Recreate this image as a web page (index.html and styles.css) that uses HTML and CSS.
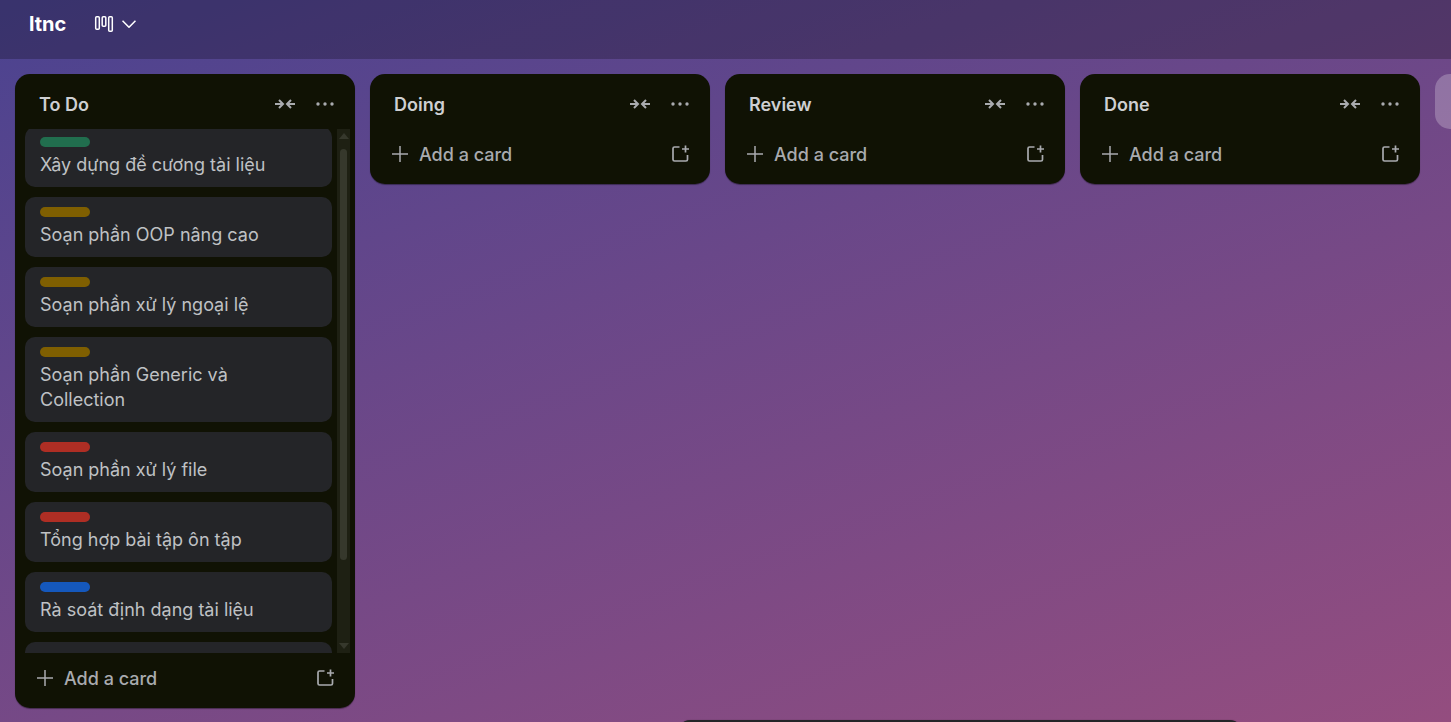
FILE: index.html
```html
<!DOCTYPE html>
<html lang="vi">

<head>
    <meta charset="UTF-8">
    <meta name="viewport" content="width=device-width, initial-scale=1.0">
    <title>ltnc</title>
    <link rel="stylesheet" href="styles.css">
</head>

<body>
    <!-- shared icons -->
    <svg class="sprite" aria-hidden="true">
        <symbol id="collapse" viewBox="0 0 20 12">
            <path d="M0 6h7M4 2l4 4-4 4M20 6h-7M16 2l-4 4 4 4" />
        </symbol>
        <symbol id="more" viewBox="0 0 20 4">
            <circle cx="3" cy="2" r="1.700" />
            <circle cx="10" cy="2" r="1.700" />
            <circle cx="17" cy="2" r="1.700" />
        </symbol>
        <symbol id="plus" viewBox="0 0 16 16">
            <path d="M8 0v16M0 8h16" />
        </symbol>
        <symbol id="template" viewBox="0 0 18 18">
            <path d="M8.500 2H3.500q-1.500 0-1.500 1.500v11q0 1.500 1.500 1.500h11.500q1.500 0 1.500-1.500V10M14.500 .5v7M11 4h7" />
        </symbol>
    </svg>

    <header class="header">
        <h1 class="board-name">ltnc</h1>
        <button class="view-button" aria-label="Board view">
            <svg class="view-icon" viewBox="0 0 20 18">
                <rect x="1.700" y="1.700" width="3.600" height="12.600" rx="1" />
                <rect x="8.200" y="1.700" width="3.600" height="9.600" rx="1" />
                <rect x="14.700" y="1.700" width="3.600" height="14.600" rx="1" />
            </svg>
            <svg class="chevron" viewBox="0 0 14 8">
                <path d="M.5.700L7 7.200 13.500.700" />
            </svg>
        </button>
    </header>

    <main class="board">
        <section class="list">
            <div class="list-header">
                <h2 class="list-title">To Do</h2>
                <button class="icon-button" aria-label="Collapse list"><svg class="collapse"><use href="#collapse" /></svg></button>
                <button class="icon-button" aria-label="List actions"><svg class="more"><use href="#more" /></svg></button>
            </div>
            <div class="list-body">
                <div class="cards" id="todoCards">
                    <article class="card">
                        <div class="label green"></div>
                        <a class="card-title" href="#">Xây dựng đề cương tài liệu</a>
                    </article>
                    <article class="card">
                        <div class="label yellow"></div>
                        <a class="card-title" href="#">Soạn phần OOP nâng cao</a>
                    </article>
                    <article class="card">
                        <div class="label yellow"></div>
                        <a class="card-title" href="#">Soạn phần xử lý ngoại lệ</a>
                    </article>
                    <article class="card">
                        <div class="label yellow"></div>
                        <a class="card-title" href="#">Soạn phần Generic và Collection</a>
                    </article>
                    <article class="card">
                        <div class="label red"></div>
                        <a class="card-title" href="#">Soạn phần xử lý file</a>
                    </article>
                    <article class="card">
                        <div class="label red"></div>
                        <a class="card-title" href="#">Tổng hợp bài tập ôn tập</a>
                    </article>
                    <article class="card">
                        <div class="label blue"></div>
                        <a class="card-title" href="#">Rà soát định dạng tài liệu</a>
                    </article>
                    <article class="card"></article>
                    <article class="card"></article>
                </div>
                <div class="scrollbar">
                    <span class="arrow up"></span>
                    <div class="track">
                        <div class="thumb"></div>
                    </div>
                    <span class="arrow down"></span>
                </div>
            </div>
            <div class="list-footer">
                <button class="add-card"><svg class="plus"><use href="#plus" /></svg>Add a card</button>
                <button class="icon-button" aria-label="Create from template"><svg class="template"><use href="#template" /></svg></button>
            </div>
        </section>

        <section class="list">
            <div class="list-header">
                <h2 class="list-title">Doing</h2>
                <button class="icon-button" aria-label="Collapse list"><svg class="collapse"><use href="#collapse" /></svg></button>
                <button class="icon-button" aria-label="List actions"><svg class="more"><use href="#more" /></svg></button>
            </div>
            <div class="list-footer">
                <button class="add-card"><svg class="plus"><use href="#plus" /></svg>Add a card</button>
                <button class="icon-button" aria-label="Create from template"><svg class="template"><use href="#template" /></svg></button>
            </div>
        </section>

        <section class="list">
            <div class="list-header">
                <h2 class="list-title">Review</h2>
                <button class="icon-button" aria-label="Collapse list"><svg class="collapse"><use href="#collapse" /></svg></button>
                <button class="icon-button" aria-label="List actions"><svg class="more"><use href="#more" /></svg></button>
            </div>
            <div class="list-footer">
                <button class="add-card"><svg class="plus"><use href="#plus" /></svg>Add a card</button>
                <button class="icon-button" aria-label="Create from template"><svg class="template"><use href="#template" /></svg></button>
            </div>
        </section>

        <section class="list">
            <div class="list-header">
                <h2 class="list-title">Done</h2>
                <button class="icon-button" aria-label="Collapse list"><svg class="collapse"><use href="#collapse" /></svg></button>
                <button class="icon-button" aria-label="List actions"><svg class="more"><use href="#more" /></svg></button>
            </div>
            <div class="list-footer">
                <button class="add-card"><svg class="plus"><use href="#plus" /></svg>Add a card</button>
                <button class="icon-button" aria-label="Create from template"><svg class="template"><use href="#template" /></svg></button>
            </div>
        </section>

        <button class="add-list" aria-label="Add another list"></button>
    </main>

    <nav class="dock"></nav>

    <script>
        // Cards start slightly scrolled
        document.getElementById("todoCards").scrollTop = 2;
    </script>
</body>

</html>
```

FILE: styles.css
```css
* {
    box-sizing: border-box;
}

body {
    margin: 0;
    height: 100vh;
    display: flex;
    flex-direction: column;
    overflow: hidden;
    font-family: Inter, "Noto Sans", sans-serif;
    font-size: 18px;
    line-height: 25px;
    color: #bfc1c4;
    background: linear-gradient(160deg, #4b4390, #944d7f);
}

h1,
h2 {
    margin: 0;
}

button {
    border: none;
    padding: 0;
    background: none;
    font: inherit;
    color: inherit;
    cursor: pointer;
}

svg {
    display: block;
    fill: none;
    stroke: currentColor;
}

.sprite {
    display: none;
}

.header {
    flex: none;
    display: flex;
    align-items: center;
    gap: 28px;
    height: 59px;
    padding: 0 29px 11px;
    color: #fff;
    background: rgba(0, 0, 0, 0.24);
}

.board-name {
    font-size: 20px;
    font-weight: 700;
}

.view-button {
    display: flex;
    align-items: center;
    gap: 8px;
}

.view-icon {
    width: 20px;
    height: 18px;
    stroke-width: 1.5;
}

.chevron {
    width: 14px;
    height: 8px;
    stroke-width: 1.6;
}

.board {
    flex: 1;
    min-height: 0;
    display: flex;
    align-items: flex-start;
    gap: 15px;
    padding: 15px 15px 14px;
    overflow: hidden;
}

.list {
    flex: none;
    display: flex;
    flex-direction: column;
    width: 340px;
    max-height: 100%;
    border-radius: 15px;
    background: #101204;
    box-shadow: 0 1px 1px rgba(0, 0, 0, 0.4);
}

.list-header {
    flex: none;
    display: flex;
    align-items: center;
    height: 55px;
    padding: 5px 10px 0 24px;
}

.list-title {
    flex: 1;
    font-size: 18px;
    font-weight: 600;
    color: #cecfd2;
}

.icon-button {
    display: flex;
    justify-content: center;
    align-items: center;
    width: 40px;
    height: 40px;
    color: #a9abaf;
}

.collapse {
    width: 20px;
    height: 12px;
    stroke-width: 2;
}

.more {
    width: 20px;
    height: 4px;
    fill: currentColor;
    stroke: none;
}

.list-body {
    flex: 1;
    min-height: 0;
    display: flex;
    gap: 5px;
    padding: 0 5px 0 10px;
}

.cards {
    flex: 1;
    display: flex;
    flex-direction: column;
    gap: 10px;
    overflow-y: auto;
    scrollbar-width: none;
}

.card {
    flex: none;
    min-height: 60px;
    padding: 10px 15px;
    border-radius: 10px;
    background: #242528;
}

.label {
    width: 50px;
    height: 10px;
    margin-bottom: 5px;
    border-radius: 5px;
}

.green {
    background: #216e4e;
}

.yellow {
    background: #7f5f01;
}

.red {
    background: #ae2e24;
}

.blue {
    background: #1558bc;
}

.card-title {
    display: block;
    color: inherit;
    text-decoration: none;
}

.scrollbar {
    display: flex;
    flex-direction: column;
    align-items: center;
    justify-content: space-between;
    width: 13px;
    padding: 4px 0;
    background: #1e2013;
}

.arrow {
    border: 5px solid transparent;
}

.up {
    border-top: none;
    border-bottom: 6px solid #36382c;
}

.down {
    border-bottom: none;
    border-top: 6px solid #36382c;
}

.track {
    flex: 1;
    width: 7px;
    padding: 10px 0;
}

.thumb {
    height: 85%;
    border-radius: 4px;
    background: #36382c;
}

.list-footer {
    flex: none;
    display: flex;
    justify-content: space-between;
    align-items: center;
    height: 55px;
    padding: 0 10px 5px 22px;
    color: #a9abaf;
}

.add-card {
    display: flex;
    align-items: center;
    gap: 11px;
    font-weight: 500;
}

.plus {
    width: 16px;
    height: 16px;
    stroke-width: 1.5;
}

.template {
    width: 18px;
    height: 18px;
    stroke-width: 1.7;
}

.add-list {
    flex: none;
    width: 340px;
    height: 55px;
    border-radius: 15px;
    background: rgba(255, 255, 255, 0.24);
}

.dock {
    position: fixed;
    left: 676px;
    bottom: -58px;
    width: 568px;
    height: 60px;
    border-radius: 15px;
    background: #242528;
    box-shadow: 0 0 1px rgba(0, 0, 0, 0.5);
}
```
